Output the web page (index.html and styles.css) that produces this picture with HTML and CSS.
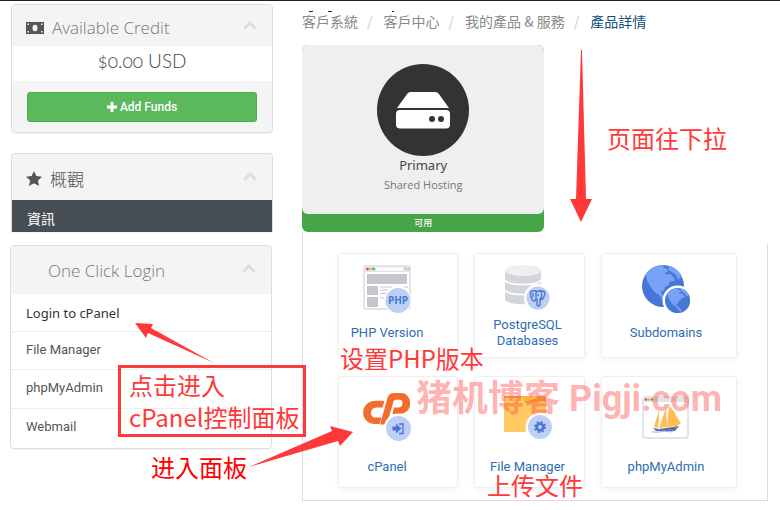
FILE: index.html
```html
<!DOCTYPE html>
<html lang="zh-Hant">
<head>
<meta charset="utf-8">
<meta name="viewport" content="width=device-width, initial-scale=1">
<title>產品詳情</title>
<link rel="stylesheet" href="styles.css">
</head>
<body>
<div class="page">
  <aside class="sidebar">
    <section class="card credit">
      <h2 class="card-head">
        <svg class="head-icon" width="18" height="12" viewBox="0 0 18 12" aria-hidden="true"><path fill="#555" d="M0 0h18v12H0z"/><path fill="#f4f4f4" d="M1.500 1.500h1.500v1.500H1.500zM15 1.500h1.500v1.500H15zM1.500 9h1.500v1.500H1.500zM15 9h1.500v1.500H15z"/><ellipse cx="9" cy="6" rx="2.500" ry="3.200" fill="#f4f4f4"/></svg>
        <span>Available Credit</span>
        <svg class="chevron" width="14" height="9" viewBox="0 0 14 9" aria-hidden="true"><path d="M1.500 7.500 7 2l5.500 5.500"/></svg>
      </h2>
      <p class="amount">$0.00 USD</p>
      <div class="card-foot">
        <button class="add-funds" type="button"><svg width="10" height="10" viewBox="0 0 10 10" aria-hidden="true"><path fill="#fff" d="M3.500 0h3v3.500H10v3H6.500V10h-3V6.500H0v-3h3.500z"/></svg>Add Funds</button>
      </div>
    </section>

    <section class="card overview">
      <h2 class="card-head dark">
        <svg class="head-icon" width="16" height="15" viewBox="0 0 16 15" aria-hidden="true"><path fill="#555" d="m8 0 2.400 5 5.600.700-4.100 3.800 1.100 5.500L8 12.300 3 15l1.100-5.500L0 5.700 5.600 5z"/></svg>
        <span>概觀</span>
        <svg class="chevron" width="14" height="9" viewBox="0 0 14 9" aria-hidden="true"><path d="M1.500 7.500 7 2l5.500 5.500"/></svg>
      </h2>
      <a class="active-item" href="#">資訊</a>
    </section>

    <section class="card login">
      <h2 class="card-head indented">
        <span>One Click Login</span>
        <svg class="chevron" width="14" height="9" viewBox="0 0 14 9" aria-hidden="true"><path d="M1.500 7.500 7 2l5.500 5.500"/></svg>
      </h2>
      <ul class="login-list">
        <li><a class="first-link" href="#">Login to cPanel</a></li>
        <li><a href="#">File Manager</a></li>
        <li><a href="#">phpMyAdmin</a></li>
        <li><a href="#">Webmail</a></li>
      </ul>
    </section>
  </aside>

  <main class="main">
    <nav aria-label="breadcrumb">
      <ol class="crumbs">
        <li><a href="#">客戶系統</a></li>
        <li><a href="#">客戶中心</a></li>
        <li><a href="#">我的產品 &amp; 服務</a></li>
        <li><a class="current" href="#">產品詳情</a></li>
      </ol>
    </nav>

    <section class="product">
      <div class="product-body">
        <svg width="94" height="94" viewBox="0 0 94 94" aria-hidden="true"><circle cx="47" cy="47" r="46" fill="#333"/><path fill="#fff" d="M34.500 29h25q2 0 3 1.500L73 45H21l10.500-14.500q1-1.500 3-1.500z"/><rect x="20" y="47" width="54" height="18.500" rx="4" fill="#fff"/><circle cx="56" cy="56" r="3" fill="#333"/><circle cx="65" cy="56" r="3" fill="#333"/></svg>
        <h1>Primary</h1>
        <p>Shared Hosting</p>
      </div>
      <div class="status">可用</div>
    </section>

    <section class="panel">
      <div class="tiles">
        <a class="tile left" href="#">
          <svg width="48" height="48" viewBox="0 0 48 48" aria-hidden="true"><rect x="1" y="1" width="46" height="43" rx="2" fill="#fff" stroke="#e3e4e9" stroke-width="2"/><path fill="#e3e4e9" d="M1 1h46v6H1z"/><path fill="#fff" d="M13 2.500h27v3H13z"/><circle cx="4.500" cy="4" r="1.300" fill="#ea4335"/><circle cx="7.500" cy="4" r="1.300" fill="#f9ab35"/><circle cx="10.500" cy="4" r="1.300" fill="#34b864"/><path fill="#c5c6cb" d="M42 3h2v2h-2zM45 3h2v2h-2zM4 9h40v10H4zM4 21h11v9H4zM4 32h11v10H4z"/><path d="M17 22h12M17 25h8M17 28.500h7M17 33h4M41 22h4" stroke="#c5c6cb" stroke-width="1"/><circle cx="35" cy="35.500" r="13.500" fill="#fff"/><circle cx="35" cy="35.500" r="12.500" fill="#bdcff5"/><text x="35" y="39" text-anchor="middle" class="badge-text">PHP</text></svg>
          <span>PHP Version</span>
        </a>
        <a class="tile middle" href="#">
          <svg width="48" height="48" viewBox="0 0 48 48" aria-hidden="true"><path fill="#d4d5d9" d="M1 5v29c0 7 36 7 36 0V5z"/><ellipse cx="19" cy="5.500" rx="18" ry="5.500" fill="#eeeff3"/><path d="M1 15c2 6 34 6 36 0M1 25c2 6 34 6 36 0" fill="none" stroke="#fff" stroke-width="1.500"/><circle cx="34" cy="33" r="14" fill="#fff"/><circle cx="34" cy="33" r="11.500" fill="#bdcff5"/><path d="M32 34c-1 3-3 3-4 0-2-4-2-7 0-8 2-.500 4 0 5 .500 2-.800 5-1 7 0 2 1.500 0 6-2 8h-2v5c0 2-3 2-3 0v-5zM32 34v-7M36 34c2-2 2-5 1-8M29 28v4M34 29v2" fill="none" stroke="#4877d5" stroke-width="1.400"/></svg>
          <span>PostgreSQL Databases</span>
        </a>
        <a class="tile right" href="#">
          <svg width="48" height="48" viewBox="0 0 48 48" aria-hidden="true"><defs><g id="globe"><circle cx="21" cy="21" r="21" fill="#4777d6"/><path fill="#78a1f8" d="M4 9C9 3 15 0 22 .300l-1 2 4 1.500 1 3-3 1 1 2 4-1 4 4 1 3-5 1-2 4-3 1-1 4-3 0 1 4 4 3 3 4 0 3-5-3-4-6-6-4-4-6-3-5zM27 1c6 1 10 5 13 10l-4 4-2-5-4-3-4-2z"/></g></defs><use href="#globe"/><circle cx="35.500" cy="35.500" r="15" fill="#fff"/><use href="#globe" transform="translate(23 23) scale(.6)"/></svg>
          <span>Subdomains</span>
        </a>
        <a class="tile tall left" href="#">
          <svg width="48" height="48" viewBox="0 0 48 48" aria-hidden="true"><path fill="#f26c2e" d="M13 7.700h8.500l-2 6.800h-6c-7 0-7 10-1.500 10h6.500l-2 6.500H12C-4 31-4 7.700 13 7.700zM24.500 5Q26 0 31 0h7c12 0 13 21-2 21h-6.500l1.500-6.500h5c4.500 0 4.500-7.700 1-7.700h-4.500q-1.500 0-2 1.700L24.500 29q-1 2.500-3.500 2.500h-4z"/><circle cx="35.500" cy="35" r="14.500" fill="#fff"/><circle cx="35.500" cy="35.500" r="12.500" fill="#bdcff5"/><path fill="#4777d6" d="M29.500 33.500H33V30.500l5.500 5-5.500 5v-3h-3.500z"/><path d="M36 31h4v9.500h-4" fill="none" stroke="#4777d6" stroke-width="1.300"/></svg>
          <span>cPanel</span>
        </a>
        <a class="tile tall middle" href="#">
          <svg width="48" height="48" viewBox="0 0 48 48" aria-hidden="true"><path fill="#f5b63f" d="M0 3h41q1 0 1 1v10H0z"/><path fill="#ffca62" d="M0 5h18l3 4h21v30H1q-1 0-1-1z"/><circle cx="36" cy="34" r="14.500" fill="#fff"/><circle cx="36" cy="34" r="12" fill="#bdcff5"/><circle cx="36" cy="34" r="3.300" fill="none" stroke="#4777d6" stroke-width="2.600"/><circle cx="36" cy="34" r="5" fill="none" stroke="#4777d6" stroke-width="2" stroke-dasharray="2 1.927"/></svg>
          <span>File Manager</span>
        </a>
        <a class="tile tall right" href="#">
          <svg width="48" height="48" viewBox="0 0 48 48" aria-hidden="true"><rect x="1" y="4" width="45" height="41" rx="3" fill="#fff" stroke="#e3e4e9" stroke-width="2"/><path fill="#e3e4e9" d="M1 4h45v5H1z"/><circle cx="4" cy="6.500" r="1.200" fill="#ea4335"/><circle cx="7" cy="6.500" r="1.200" fill="#f9ab35"/><circle cx="10" cy="6.500" r="1.200" fill="#34b864"/><path fill="#ffbd53" d="m17 17-5 17 4 1 1-9zM24 15l-7 20 8-1zM27 13c6 5 8 12 12 17l-4 3-10 1 1-11z"/><path fill="#6770a5" d="m11 35 6 1 20-3-4 5H14z"/><path d="M10 39h8l4-1 6 1 3-1" fill="none" stroke="#8fb1ed" stroke-width="1"/></svg>
          <span>phpMyAdmin</span>
        </a>
      </div>
    </section>
  </main>

  <div class="notes">
    <p class="watermark">猪机博客 Pigji.com</p>
    <svg class="arrows" width="780" height="510" viewBox="0 0 780 510" aria-hidden="true">
      <path fill="#222" d="M309 11h4v1h-4zM328 11h4v1h-4zM392 11h2v1h-2z"/>
      <g fill="#ff3939"><path d="M581 50h1l4 149h6l-11 23-11-23h6z"/><path d="m135 323 18 1-2 4 63 35-66-30-2 5z"/><path d="m249 467 83-36-2-5 23 6-13 14-2-5z"/></g>
    </svg>
    <p class="note scroll">页面往下拉</p>
    <p class="note boxed">点击进入<br>cPanel控制面板</p>
    <p class="note enter">进入面板</p>
    <p class="note version">设置PHP版本</p>
    <p class="note upload">上传文件</p>
  </div>
</div>
</body>
</html>
```
FILE: styles.css
```css
* { box-sizing: border-box; }

body {
  margin: 0;
  background: #fff;
  color: #555;
  font-family: Roboto, "Noto Sans CJK TC", sans-serif;
  font-size: 13px;
}

h1, h2, p, ul, ol { margin: 0; padding: 0; font-weight: 400; }
ul, ol { list-style: none; }
a { color: inherit; text-decoration: none; }
svg { display: block; }

.page {
  position: relative;
  display: grid;
  grid-template-columns: minmax(0, 262fr) minmax(0, 466fr);
  gap: 29px;
  padding: 3px 12px 8px 11px;
  border-top: 1px solid #231f20;
}

/* Sidebar */
.card {
  border: 1px solid #ddd;
  border-radius: 4px;
  overflow: hidden;
  box-shadow: 0 1px 1px rgba(0, 0, 0, .05);
}

.card-head {
  display: flex;
  align-items: center;
  gap: 8px;
  height: 41px;
  padding: 4px 15px 0 14px;
  background: #f4f4f4;
  color: #777;
  font: 300 17px "Open Sans", "Noto Sans CJK TC", sans-serif;
}

.chevron {
  margin: 0 0 4px auto;
  fill: none;
  stroke: #ddd;
  stroke-width: 3;
}

.amount {
  height: 35px;
  color: #444;
  font: 300 19px/30px Lato, sans-serif;
  font-variant-numeric: oldstyle-nums;
  text-align: center;
}

.card-foot { padding: 11px 15px 10px; background: #f4f4f4; }

.add-funds {
  display: flex;
  align-items: center;
  justify-content: center;
  gap: 3px;
  width: 100%;
  height: 30px;
  border: 1px solid #4cae4c;
  border-radius: 3px;
  background: #5cb85c;
  color: #fff;
  font: 500 12px Roboto, sans-serif;
}

.overview {
  margin-top: 20px;
  border-bottom: 0;
  border-radius: 4px 4px 0 0;
}
.overview .card-head { height: 46px; padding-top: 2px; }
.card-head.dark { color: #555; }

.active-item {
  display: block;
  height: 32px;
  padding-left: 15px;
  background: #474f54;
  color: #fff;
  font: 14px/36px "Noto Sans CJK TC", sans-serif;
}

.login { margin: 13px 1px 0 -1px; }
.login .card-head { height: 48px; padding: 0 15px 0 37px; }
.login-list li { height: 38px; padding-left: 15px; border-bottom: 1px solid #eee; line-height: 36px; }
.login-list li:nth-child(n + 3) { height: 39px; }
.login-list li:last-child { border-bottom: 0; }
.first-link { color: #333; font: 13px/38px "Noto Sans", sans-serif; }

/* Main column */
.crumbs {
  display: flex;
  height: 41px;
  color: #888;
  font: 14px/34px "Noto Sans CJK TC", sans-serif;
  white-space: nowrap;
}
.crumbs li + li::before { content: "/"; padding: 0 11px 0 9px; color: #ccc; }
.crumbs .current { color: #0e5077; }

.product {
  width: 52%;
  border-radius: 6px;
  background: #46a546;
}

.product-body {
  display: flex;
  flex-direction: column;
  align-items: center;
  height: 169px;
  padding-top: 18px;
  border-radius: 6px;
  background: #efefef;
}
.product-body h1 { color: #444; font: 13px/16px "Noto Sans", sans-serif; }
.product-body p { color: #777; font: 11px/24px "Open Sans", sans-serif; }

.status {
  height: 18px;
  color: #fff;
  font: 500 9px/18px "Noto Sans CJK TC", sans-serif;
  text-align: center;
}

.panel {
  position: relative;
  padding: 21px 31px 12px 35px;
  border: 1px solid #ddd;
  border-width: 0 0 1px 1px;
}
.panel::after {
  content: "";
  position: absolute;
  top: 12px;
  right: 0;
  bottom: 0;
  border-right: 1px solid #ddd;
}

.tiles {
  display: grid;
  grid-template-columns: minmax(0, 120fr) minmax(0, 111fr) minmax(0, 136fr);
  gap: 18px 16px;
}

.tile {
  display: flex;
  flex-direction: column;
  align-items: center;
  gap: 4px;
  height: 105px;
  padding-top: 11px;
  border: 1px solid #eeeef0;
  border-radius: 3px;
  box-shadow: 0 2px 6px rgba(0, 0, 0, .05);
  color: #2f6db2;
  text-align: center;
}
.tile.tall { gap: 10px; height: 112px; padding-top: 16px; }
.tile.left { padding-right: 22px; }
.tile.middle { padding-right: 4px; }
.tile.right { padding-right: 6px; }
.tile span { display: flex; align-items: center; min-height: 32px; line-height: 16px; }
.tile svg { flex: none; }
.badge-text { fill: #4777d6; font: 700 10px "Open Sans", sans-serif; }

/* Annotations drawn over the page */
.notes { position: absolute; inset: -1px 0 0; pointer-events: none; }
.arrows { position: absolute; top: 0; left: 0; }

.note {
  position: absolute;
  color: #ff3939;
  font: 24px/32px "Noto Sans CJK SC", sans-serif;
  white-space: nowrap;
}
.scroll { top: 122px; left: 607px; }
.boxed { top: 365px; left: 118px; width: 188px; height: 72px; padding: 1px 8px; border: 3px solid #ff3939; }
.enter { top: 451px; left: 151px; color: #f00; }
.version { top: 342px; left: 340px; }
.upload { top: 469px; left: 487px; }

.watermark {
  position: absolute;
  top: 375px;
  left: 416px;
  color: rgba(255, 57, 57, .4);
  font: 700 36px/48px Roboto, "Noto Sans CJK SC", sans-serif;
  white-space: nowrap;
}
```
